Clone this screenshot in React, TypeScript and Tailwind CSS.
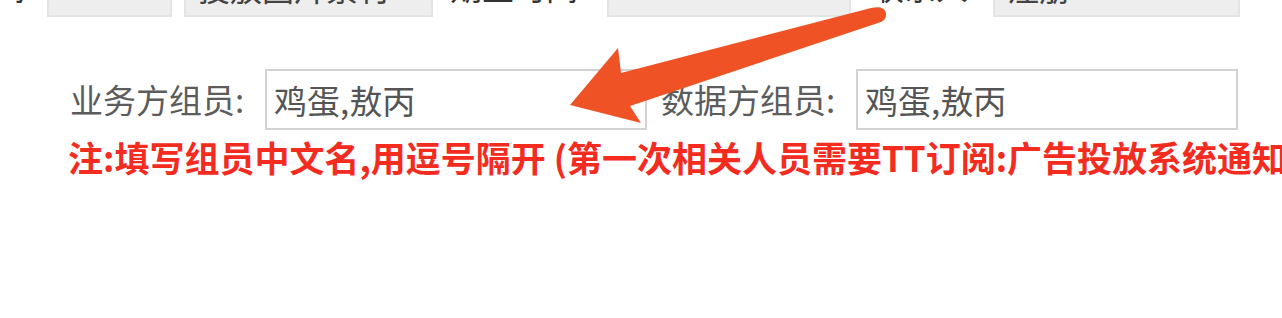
const font = "font-['Noto_Sans_CJK_SC','Noto_Sans',sans-serif]";

function TopInput({ width, value }: { width: string; value: string }) {
  return (
    <div className={`flex h-[61px] shrink-0 items-end border-2 border-[#e4e4e4] bg-[#eeeeee] px-3 pb-[12px] text-[32px] leading-none text-[#444] ${width}`}>
      <span className="whitespace-nowrap">{value}</span>
    </div>
  );
}

function MemberField({ label, value, gap }: { label: string; value: string; gap: string }) {
  return (
    <div className={`flex items-center ${gap}`}>
      <label className="w-[195px] shrink-0 whitespace-nowrap text-[33px] leading-none text-[#5c5c5c]">{label}</label>
      <input
        readOnly
        value={value}
        className="h-[61px] w-[382px] border-2 border-[#d2d2d2] bg-white px-[7px] text-[33px] text-[#555] outline-none"
      />
    </div>
  );
}

export default function App() {
  return (
    <div className={`relative h-[318px] w-[1282px] overflow-hidden bg-white ${font}`}>
      <div className="-mt-[44px] flex h-[61px] items-end">
        <div className="flex w-[25px] shrink-0 justify-end pb-[15px] text-[32px] leading-none text-[#333]">
          <span className="whitespace-nowrap">时间</span>
        </div>
        <div className="ml-[22px]">
          <TopInput width="w-[125px]" value="" />
        </div>
        <div className="ml-[12px]">
          <TopInput width="w-[249px]" value="投放图片素材" />
        </div>
        <div className="ml-[17px] w-[157px] shrink-0 whitespace-nowrap pb-[15px] text-[32px] leading-none text-[#333]">期望时间</div>
        <TopInput width="w-[244px]" value="" />
        <div className="ml-[21px] w-[121px] shrink-0 whitespace-nowrap pb-[15px] text-[32px] leading-none text-[#333]">联系人</div>
        <TopInput width="w-[247px]" value="注册" />
      </div>

      <div className="mt-[52px] flex pl-[70px]">
        <MemberField label="业务方组员:" value="鸡蛋,敖丙" gap="" />
        <MemberField label="数据方组员:" value="鸡蛋,敖丙" gap="ml-[14px]" />
      </div>

      <p className="mt-[7px] whitespace-nowrap pl-[68px] text-[35px] font-bold leading-[40px] text-[#f42b1f]">
        注:填写组员中文名,用逗号隔开 (第一次相关人员需要TT订阅:广告投放系统通知
      </p>

      <svg className="absolute left-0 top-0" width="1282" height="318" viewBox="0 0 1282 318">
        <path
          d="M570 105 L618 48 L621 73 L871 8 Q884 5 886 13 Q887 21 878 23 L630 106 L641 123 Z"
          fill="#ef5325"
        />
      </svg>
    </div>
  );
}
